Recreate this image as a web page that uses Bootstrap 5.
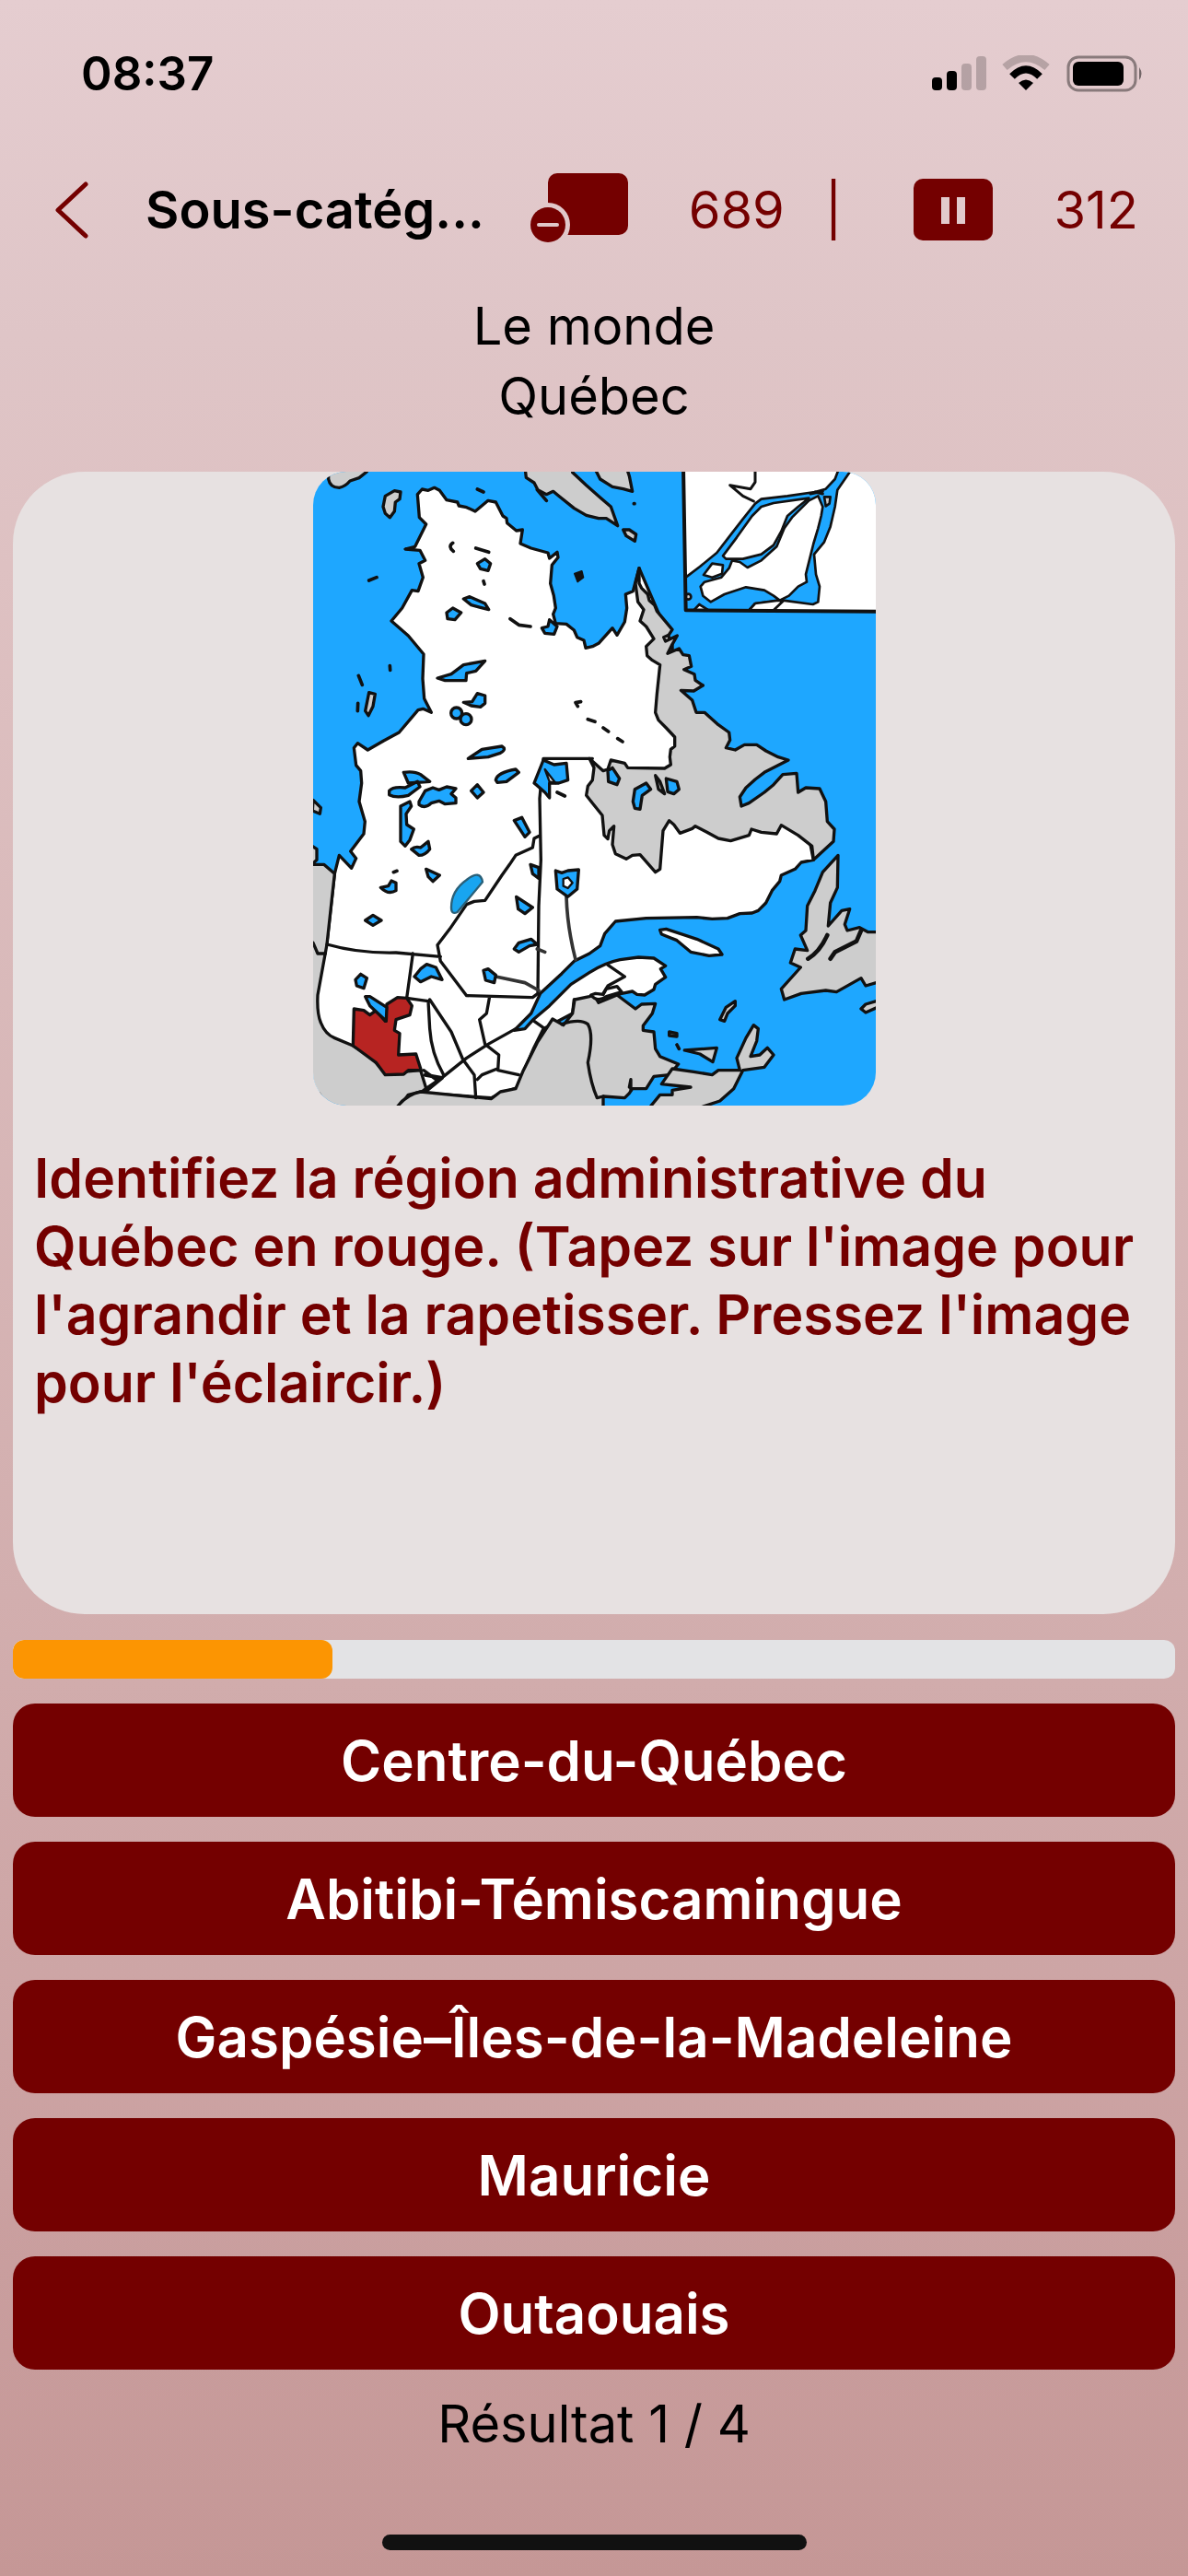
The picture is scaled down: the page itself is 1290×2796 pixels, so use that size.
<!DOCTYPE html>
<html lang="fr">
<head>
<meta charset="utf-8">
<meta name="viewport" content="width=device-width, initial-scale=1">
<title>Quiz – Québec</title>
<link href="https://cdn.jsdelivr.net/npm/bootstrap@5.3.0/dist/css/bootstrap.min.css" rel="stylesheet">
<style>
  :root { --maroon: #740000; }
  body {
    font-family: Inter, "Liberation Sans", sans-serif;
    color: #000;
    background: linear-gradient(#e5cdd0 0%, #dfc5c7 13%, #dec1c2 22%, #d2aeae 62%, #c99e9e 88%, #c59796 100%);
  }
  .screen { padding: 0 14px 28px; }
  .status-row { height: 160px; padding: 0 34px 0 74px; }
  .clock { font-size: 51px; font-weight: 600; line-height: 60px; }
  .title-row { height: 136px; padding: 0 40px 0 44px; font-size: 56px; line-height: 64px; color: var(--maroon); }
  .title-row button { color: inherit; line-height: 0; }
  .page-title { font-size: 56px; font-weight: 600; line-height: 64px; color: #000; margin: 0 0 0 60px; }
  .count { margin-left: 66px; }
  .split { margin: 0 78px 0 44px; }
  .crumbs { font-size: 56px; line-height: 76px; padding: 20px 0 44px; }
  .question-card { background: #e7e1e1; border-radius: 78px; overflow: hidden; }
  .map-btn { line-height: 0; }
  .map-art { width: 611px; height: 688px; border-radius: 36px; }
  .question { color: var(--maroon); font-size: 59px; font-weight: 600; line-height: 74px; padding: 42px 20px 0 23px; margin: 0; }
  .progress.timer { height: 42px; border-radius: 12px; background: #e3e3e5; margin: 28px 0 27px; }
  .timer .progress-bar { background: #fc9502; border-radius: 12px; }
  .answers { gap: 27px; }
  .answer { height: 123px; border: 0; border-radius: 24px; background: var(--maroon); color: #fff; font-size: 60px; font-weight: 600; line-height: 72px; padding: 0; }
  .answer:hover { background: #5c0000; color: #fff; }
  .score { font-size: 56px; line-height: 72px; margin: 23px 0 84px; }
  .home-bar { width: 461px; height: 17px; background: #111; }
</style>
</head>
<body>
<div class="screen d-flex flex-column min-vh-100">

  <div class="status-row d-flex align-items-center justify-content-between">
    <span class="clock">08:37</span>
    <svg width="232" height="40" viewBox="0 0 232 40" aria-hidden="true">
      <rect x="2" y="24" width="11" height="14" rx="4"/>
      <rect x="18" y="17" width="11" height="21" rx="4"/>
      <g opacity=".2"><rect x="34" y="9" width="11" height="29" rx="4"/><rect x="50" y="1" width="11" height="37" rx="4"/></g>
      <path d="M81 13Q104-7 127 13" fill="none" stroke="#000" stroke-opacity=".2" stroke-width="8"/>
      <path d="M89 23Q104 8 119 23" fill="none" stroke="#000" stroke-width="8"/>
      <path d="M96 30Q104 23 112 30L104 38Z"/>
      <rect x="150" y="2" width="73" height="36" rx="11" fill="none" stroke="#000" stroke-opacity=".4" stroke-width="3"/>
      <rect x="155" y="7" width="55" height="26" rx="6"/>
      <path d="M227 13q5 7 0 14Z" opacity=".5"/>
    </svg>
  </div>

  <header class="title-row d-flex align-items-center">
    <button type="button" class="btn p-0 border-0" aria-label="Retour">
      <svg width="40" height="64" viewBox="0 0 40 64"><path d="M35 4L5 32L35 60" fill="none" stroke="currentColor" stroke-width="5" stroke-linecap="round" stroke-linejoin="round"/></svg>
    </button>
    <h1 class="page-title">Sous-catég...</h1>
    <div class="ms-auto d-flex align-items-center">
      <button type="button" class="btn p-0 border-0" aria-label="Retirer une carte">
        <svg width="106" height="84" viewBox="0 0 106 84">
          <mask id="ring"><rect width="106" height="84" fill="#fff"/><circle cx="19" cy="58" r="24" fill="#000"/></mask>
          <rect x="19" y="2" width="87" height="67" rx="10" fill="currentColor" mask="url(#ring)"/>
          <circle cx="19" cy="58" r="19" fill="currentColor"/>
          <path d="M9 58H29" stroke="#e0c7c9" stroke-width="4" stroke-linecap="round"/>
        </svg>
      </button>
      <span class="count">689</span>
      <span class="split">|</span>
      <button type="button" class="btn p-0 border-0" aria-label="Pause">
        <svg width="86" height="68" viewBox="0 0 86 68"><rect width="86" height="67" rx="10" fill="currentColor"/><path d="M30 20h9v29h-9zM47 20h9v29h-9z" fill="#e2cacc"/></svg>
      </button>
      <span class="count">312</span>
    </div>
  </header>

  <div class="crumbs text-center">
    <div>Le monde</div>
    <div>Québec</div>
  </div>

  <main class="flex-grow-1 d-flex flex-column">
    <section class="question-card flex-grow-1">
      <div class="text-center map-btn">
        <button type="button" class="btn p-0 border-0 map-btn" aria-label="Agrandir la carte du Québec">
          <svg class="map-art" viewBox="30 36 1833 2064" preserveAspectRatio="none" stroke-linejoin="round" stroke-linecap="round">
            <rect x="30" y="36" width="1833" height="2064" fill="#1ea7ff"/>
            <g stroke="#111" stroke-width="10">
              <!-- northern islands -->
              <g fill="#cdcdcd">
                <path d="M80 60Q85 88 115 88Q135 84 150 66L180 56L205 36V20H80Z"/>
                <path d="M265 115L295 98L315 102L312 125L298 135L295 165L280 185L265 172L258 150Z"/>
                <path d="M720 20L724 55L750 72L762 95L790 110L812 100L830 115L880 155L920 178L960 188L985 188L1022 212L1000 150L965 120L920 80L875 38V20Z"/>
                <path d="M945 20L965 60L1005 85L1040 92L1070 100L1060 50L1050 20Z"/>
                <path d="M1040 225L1060 225L1082 240L1078 262L1050 245Z"/>
                <path d="M212 755L232 760L225 800L210 830L200 815Z"/>
              </g>
              <!-- Québec mainland -->
              <path fill="#fff" d="M100 1345L115 1285L155 1327L170 1295L152 1272L195 1215L199 1175L180 1110L188 1050L185 1010L170 992L163 935L175 920L208 942L260 912L310 885L372 812L388 808L415 820L392 775L387 710L390 630L340 570L285 522L320 480L352 422L372 425L388 380L375 335L395 325L378 292L330 288L362 280L398 207L376 185L370 110L385 93L405 97L425 88L442 97L465 128L500 135L505 147L530 152L558 165L600 130L625 135L648 180L660 188L662 203L692 228L712 225L705 270L740 285L795 300L800 318L825 298L828 315L808 340L803 400L814 440L820 480L812 500L820 530L855 532L880 552L890 575L912 585L918 610L940 605L960 595L1005 545L1020 568L1045 525L1052 480L1048 435L1072 425L1092 350L1200 600L1210 950L1400 1150L1640 1200L1660 1300L1620 1308L1600 1330L1555 1350L1550 1370L1525 1400L1505 1440L1480 1465L1460 1473L1420 1475L1380 1490L1330 1492L1280 1487L1115 1490L1015 1500L980 1540L965 1580L930 1605L880 1630L840 1670L770 1735L740 1800L685 1855L720 1850L745 1822L800 1775L870 1705L930 1667Q980 1635 1030 1625L1090 1617L1140 1620L1178 1645L1162 1655L1178 1682L1145 1705L1140 1722L1110 1740L1085 1738L1070 1728L1035 1735L950 1770L880 1755L875 1800L780 1850L750 1910L720 1980L700 2040L640 2060L610 2075L400 2060L20 2060V1600L75 1570Z"/>
              <!-- Labrador -->
              <path fill="#cdcdcd" d="M1092 350L1092 400L1100 415L1120 435L1125 455L1142 470L1150 490L1200 550L1188 568L1172 575L1178 588L1216 570L1200 598L1185 628L1222 612L1235 632L1255 635L1262 670L1238 680L1272 695L1275 715L1300 732L1270 750L1228 748L1265 780L1278 820L1305 820L1350 860L1385 885L1388 910L1375 935L1405 942L1435 925L1475 925L1505 945L1545 965L1578 975L1500 1015L1470 1038L1440 1065L1420 1095L1425 1125L1450 1115L1500 1080L1530 1055L1560 1022L1605 1018L1610 1080L1635 1065L1680 1068L1700 1110L1705 1175L1728 1200L1725 1240L1660 1300L1655 1255L1610 1220L1555 1187L1540 1215L1490 1210L1458 1200L1450 1220L1390 1238L1350 1230L1310 1208L1275 1190L1265 1198L1225 1213L1205 1185L1190 1172L1170 1205L1160 1330L1145 1340L1095 1283L1070 1285L1050 1297L1015 1280L1005 1250L1010 1190L995 1205L990 1232L978 1220L972 1155L940 1115L920 1090L925 1060L940 1040L945 1000L930 970L975 1010L990 1005L1000 975L1045 985L1055 1000L1175 1002L1195 990L1192 965L1195 940L1208 930L1208 900L1180 870L1155 845L1145 820L1150 760L1160 665L1135 650L1118 635L1115 605L1140 580L1115 540L1095 522L1107 485L1088 460L1080 400Z"/>
              <!-- Newfoundland -->
              <path fill="#cdcdcd" d="M1740 1285L1690 1340L1665 1400L1640 1450L1635 1530L1618 1545L1640 1595L1600 1590L1585 1635L1618 1650L1555 1720L1565 1755L1620 1735L1700 1725L1735 1730L1815 1685L1830 1710L1880 1695V1535L1838 1535L1810 1520L1770 1530L1762 1510L1778 1460L1752 1465L1708 1515L1715 1440L1738 1390Z"/>
              <path fill="#cdcdcd" d="M1880 1755L1830 1770L1815 1785L1830 1797L1880 1775Z"/>
              <path fill="none" stroke-width="14" d="M1642 1622Q1680 1600 1705 1545M1715 1622L1730 1600L1800 1565L1815 1530"/>
              <!-- Ontario, west shore -->
              <path fill="#cdcdcd" d="M20 1315L65 1315L100 1345L75 1575L45 1740Q42 1800 55 1830Q70 1868 100 1880L160 1905L200 1930L230 1955L265 1995L380 1985L400 2050L340 2065L300 2120H20Z"/>
              <path fill="#cdcdcd" d="M30 1105L55 1130L52 1150L28 1140ZM20 1250L42 1265L42 1300L20 1320Z"/>
              <path fill="none" d="M30 1570L45 1605L70 1605"/>
              <!-- United States and New Brunswick -->
              <path fill="#cdcdcd" d="M300 2110Q330 2065 380 2055L610 2078L640 2055L690 2045L715 1985L760 1895L810 1818L845 1838L875 1800L882 1755L930 1745L945 1740L960 1765L1020 1740L1080 1785L1100 1770L1145 1768L1135 1800L1105 1840L1105 1855L1140 1860L1145 1915L1160 1940L1220 1965L1190 2000L1140 2005L1115 2045L1070 2045L1060 2060L1045 2075L975 2070L975 2120H300Z"/>
              <path fill="none" d="M840 1835Q900 1815 925 1835Q945 1870 925 1960Q935 2030 955 2075L975 2070M1060 2040L1065 2015V2050"/>
              <path fill="#fff" d="M935 1740Q955 1765 985 1745L1035 1730L1020 1712L985 1720L975 1738L950 1735Z"/>
              <!-- Nova Scotia, Cape Breton -->
              <path fill="#cdcdcd" d="M1115 2120L1160 2065L1200 2065L1200 2050L1260 2040L1165 2030L1200 1980L1270 1990L1330 2000L1350 1985L1420 1985L1410 1945L1440 1880L1465 1838L1480 1850L1475 1890L1455 1940L1485 1935L1510 1912L1530 1935L1500 1975L1430 1985L1400 2045L1355 2085L1280 2110Z"/>
              <path fill="#cdcdcd" d="M1240 1920L1345 1912L1332 1958L1290 1932ZM1355 1820L1375 1780L1405 1760L1405 1775L1380 1800L1370 1825ZM1190 1860L1215 1865L1215 1875L1190 1872Z"/>
              <!-- Anticosti -->
              <path fill="#fff" d="M1160 1528L1180 1525L1280 1558L1350 1590L1362 1608L1320 1612L1260 1600L1215 1562L1165 1542Z"/>
              <!-- region borders -->
              <path fill="none" d="M780 970L768 1100L772 1300L765 1450L762 1735L745 1748L530 1742L445 1630L435 1577L475 1525L530 1445L555 1435L590 1432L645 1350L670 1315L690 1285L745 1260L750 1230L770 1220M75 1575Q180 1605 300 1602L445 1615M355 1605L335 1750L405 1760L410 1850Q415 1930 455 2000M410 1755L480 1860L518 1950L555 2000L560 2075M780 970L940 970M605 1745L595 1800L572 1820L590 1900L635 1935L632 1985L700 2000M390 2050L455 2005L530 1945L600 1900L690 1850M565 2015L580 2000L630 1980M390 1985L430 2015M750 1825L785 1850M990 1642L1045 1680L990 1710L975 1735"/>
              <path fill="none" stroke-width="12" d="M395 2000L450 2010L395 2055"/>
              <path fill="none" stroke-width="11" stroke="#333" d="M855 1420Q858 1520 885 1625M625 1680L720 1700L765 1725M760 1590L785 1600"/>
              <!-- Outaouais highlighted -->
              <path fill="#b72422" d="M163 1785L195 1790L215 1805L235 1790L265 1825L270 1770L305 1748L335 1750L352 1775L345 1805L300 1820L295 1855L312 1865L308 1935L365 1932L382 1985L340 1985L325 1998L265 2000L235 1960L160 1905Z"/>
              <!-- lakes -->
              <g fill="#1ea7ff">
                <path d="M200 1745L215 1745L270 1780L268 1825L215 1775Z"/>
                <path d="M565 335L590 320L608 335L600 358L575 352Z"/>
                <path d="M465 495L485 480L512 495L492 518L468 515ZM520 450L540 443L590 465L602 485L575 478L545 470Z"/>
                <path d="M435 708L480 695L520 665L590 652L560 685L530 692L528 716L460 716ZM520 787L548 785L565 758L590 765L590 790L575 802L545 798Z"/>
                <circle cx="497" cy="822" r="18"/><circle cx="528" cy="842" r="18"/>
                <path d="M535 970L580 940L645 930Q662 940 640 952L600 965ZM325 1015Q360 1010 380 1022L410 1045L340 1050ZM625 1040Q630 1015 690 1005L700 1015L660 1045L630 1048Z"/>
                <path d="M278 1075Q290 1060 330 1065L370 1045L378 1062L340 1090Q300 1100 278 1088ZM375 1110L395 1075L420 1065L440 1072L465 1062L495 1068L480 1085L495 1098V1115L460 1118L440 1108L415 1115Q395 1135 375 1120ZM545 1075L565 1055L585 1080L565 1098Z"/>
                <path d="M315 1125L345 1110L350 1125L333 1150L335 1185L358 1200L345 1235L330 1255L315 1240ZM350 1265Q362 1255 380 1260L405 1240L410 1265Q395 1285 375 1285Z"/>
                <path d="M250 1390L275 1385L285 1368L300 1375V1400Q275 1415 250 1390ZM398 1330L442 1350L420 1370L405 1355ZM200 1497L225 1480L252 1497L225 1513ZM168 1690L185 1672L205 1685L195 1718L172 1710Z"/>
                <path d="M360 1680L380 1655L400 1640L430 1650L450 1690L415 1680L380 1697ZM585 1660L600 1655L625 1675L620 1700L592 1692Z"/>
                <path d="M685 1172L710 1162L735 1210L720 1225ZM738 1315L765 1325L765 1360L745 1345ZM692 1420L745 1455L720 1475L698 1460ZM685 1590L700 1570L740 1558L760 1575L735 1580L700 1600Z"/>
                <path d="M820 1335L840 1342L860 1335L895 1332L890 1395L860 1420L825 1395Z"/>
                <path d="M775 545L795 540L800 518L825 540L815 565L785 562Z"/>
                <path d="M750 1050L780 975L815 990L855 985L860 1040L830 1050L800 1050L800 1098L785 1080L760 1058Z"/>
                <path d="M990 1010L1005 1000L1028 1035L1020 1055L992 1045ZM1072 1110L1078 1070L1115 1050L1130 1070L1102 1090L1095 1135L1078 1132ZM1180 1035L1215 1045L1222 1070L1205 1085L1185 1078Z"/>
              </g>
              <path fill="#fff" stroke-width="7" d="M785 1005L820 1050L800 1045ZM845 1362L860 1357L875 1375L860 1392L845 1385Z"/>
              <path fill="#cdcdcd" d="M1145 1025L1160 1045L1175 1085L1155 1070Z"/>
            </g>
            <path d="M480 1455Q480 1400 530 1365Q575 1330 582 1372Q550 1410 500 1470Q480 1480 480 1455Z" fill="#18a5f0" stroke="#2a6078" stroke-width="7"/>
            <!-- islets and dashes -->
            <path fill="none" stroke="#111" stroke-width="11" d="M565 93L585 102M760 95L790 130M485 268Q468 280 487 295M560 285L602 298M585 392L588 402M672 515L700 535L738 540M212 390L237 380M280 668L281 682M178 700L190 730M176 790L175 815M902 785L885 788L892 800M925 842L948 850M975 870L992 882M1022 905L1038 915M1075 140H1077M825 1080L850 1092M292 1340L303 1336M1215 1902L1222 1915"/>
            <path d="M882 368L905 360L910 380L892 394Z" fill="#111" stroke="#111" stroke-width="6"/>
            <!-- inset map -->
            <path d="M1236 20H1880V490L1244 487Z" fill="#fff"/>
            <g fill="#1ea7ff" stroke="#111" stroke-width="8" stroke-linejoin="round">
              <path d="M1244 380L1290 345L1345 300L1395 235L1430 190L1470 140L1490 125L1575 115L1665 102L1700 92L1730 60L1745 20H1790L1738 95L1730 150L1715 215L1695 265L1662 305L1668 370L1680 410L1675 460L1658 468L1560 455L1470 465L1450 487H1244Z"/>
              <path fill="#fff" d="M1365 310L1410 250L1460 180L1490 150L1530 138L1645 122L1610 150L1575 180L1555 230L1530 275L1490 305L1430 320L1375 320Z"/>
              <path fill="#fff" d="M1302 372L1330 335L1365 340L1362 368L1330 380Z"/>
              <path fill="#fff" d="M1685 180L1675 220L1660 270L1650 310L1635 370L1638 395L1610 410L1580 440L1550 455L1530 440L1500 422L1440 412L1370 435L1325 460L1300 440L1292 410L1305 395L1360 380L1385 350L1395 325L1420 330L1445 348L1490 325L1540 280L1565 220L1590 185L1645 130L1675 115L1690 150Z"/>
              <path fill="#fff" d="M1270 487L1288 468L1318 487ZM1450 487L1470 465L1545 455L1560 458L1530 487Z"/>
              <path fill="#cdcdcd" d="M1695 118L1715 118L1712 140L1700 148Z"/>
              <circle cx="1252" cy="443" r="9" fill="#cdcdcd"/>
            </g>
            <path d="M1470 20V70L1455 92L1388 80L1430 115L1465 132M1665 102L1690 108M1650 108L1690 100" fill="none" stroke="#111" stroke-width="9"/>
            <path d="M1236 20L1244 487L1880 491" fill="none" stroke="#111" stroke-width="12"/>
          </svg>
        </button>
      </div>
      <p class="question">Identifiez la région administrative du Québec en rouge. (Tapez sur l'image pour l'agrandir et la rapetisser. Pressez l'image pour l'éclaircir.)</p>
    </section>

    <div class="progress timer" role="progressbar" aria-label="Temps écoulé" aria-valuenow="27" aria-valuemin="0" aria-valuemax="100">
      <div class="progress-bar" style="width: 27.5%"></div>
    </div>

    <div class="answers d-grid">
      <button type="button" class="btn answer">Centre-du-Québec</button>
      <button type="button" class="btn answer">Abitibi-Témiscamingue</button>
      <button type="button" class="btn answer">Gaspésie–Îles-de-la-Madeleine</button>
      <button type="button" class="btn answer">Mauricie</button>
      <button type="button" class="btn answer">Outaouais</button>
    </div>
  </main>

  <p class="score text-center">Résultat 1 / 4</p>
  <div class="home-bar rounded-pill mx-auto"></div>
</div>
<script src="https://cdn.jsdelivr.net/npm/bootstrap@5.3.0/dist/js/bootstrap.bundle.min.js"></script>
</body>
</html>
